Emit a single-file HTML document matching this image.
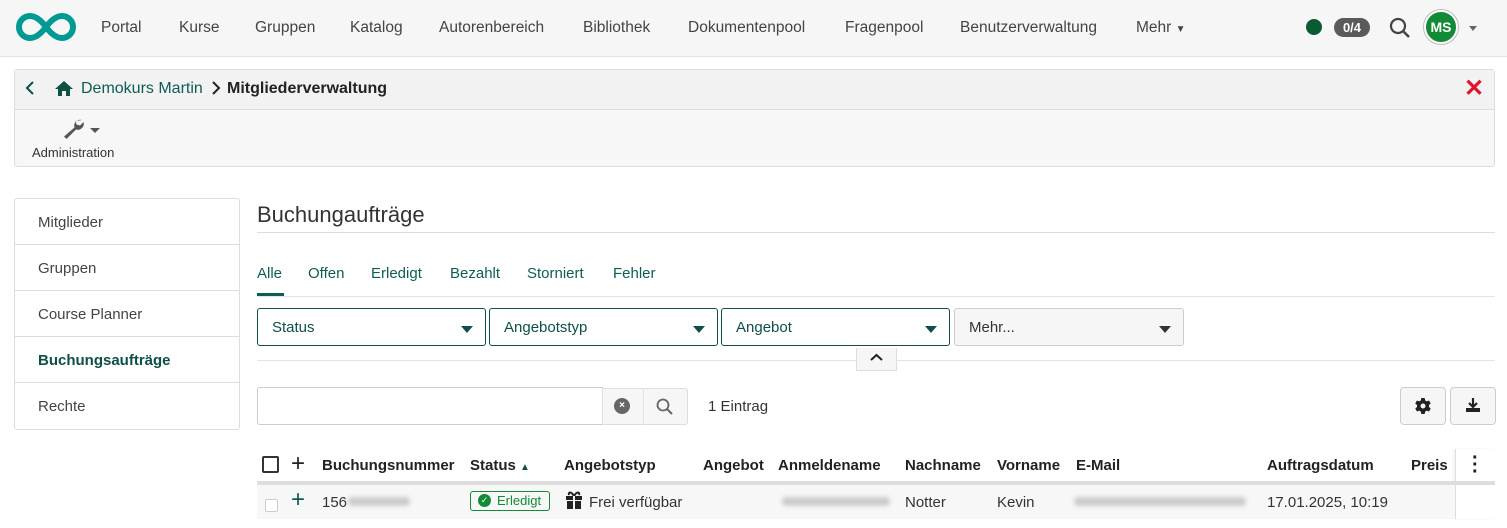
<!DOCTYPE html>
<html><head><meta charset="utf-8"><style>
*{box-sizing:border-box;margin:0;padding:0}
body{width:1507px;height:528px;overflow:hidden;background:#fff;font-family:"Liberation Sans",sans-serif;color:#333;font-size:15px;position:relative}
.abs{position:absolute}
.top{left:0;top:0;width:1507px;height:57px;background:#f6f6f6;border-bottom:1px solid #e3e3e3}
.nav{top:19px;font-size:15.5px;color:#444}
.g{color:#0e5d55}
.bc{left:14px;top:69px;width:1481px;height:98px;border:1px solid #ddd;border-radius:3px;background:#f7f7f7}
.bch{height:40px;border-bottom:1px solid #ddd;background:#f2f2f2}
.side{left:14px;top:198px;width:226px;height:232px;border:1px solid #ddd;border-radius:3px}
.side div{height:46px;border-bottom:1px solid #ddd;padding:15px 0 0 23px;font-size:15px;color:#444}
.side div:last-child{border-bottom:none}
.sel{border:1px solid #0e4f48;border-radius:3px;height:38px;padding:10px 14px;font-size:15px;color:#0e4f48}
.car{position:absolute;right:12px;top:17px;border-left:6px solid transparent;border-right:6px solid transparent;border-top:7px solid #0e4f48}
.th{top:457px;font-weight:bold;font-size:15px;color:#222}
.td{top:494px;font-size:15px;color:#333}
.blur{height:9px;background:#ccc;filter:blur(2px);border-radius:4px}
</style></head><body>
<div class="abs top"></div>
<svg class="abs" style="left:16px;top:12px" width="60" height="30" viewBox="0 0 60 30"><path d="M30 15C24 7 19 4 14 4A11 11 0 0 0 14 26C19 26 24 23 30 15C36 7 41 4 46 4A11 11 0 0 1 46 26C41 26 36 23 30 15Z" fill="none" stroke="#009a93" stroke-width="6"/></svg>
<div class="abs nav" style="left:101px">Portal</div>
<div class="abs nav" style="left:179px">Kurse</div>
<div class="abs nav" style="left:255px">Gruppen</div>
<div class="abs nav" style="left:350px">Katalog</div>
<div class="abs nav" style="left:439px">Autorenbereich</div>
<div class="abs nav" style="left:583px">Bibliothek</div>
<div class="abs nav" style="left:688px">Dokumentenpool</div>
<div class="abs nav" style="left:845px">Fragenpool</div>
<div class="abs nav" style="left:960px">Benutzerverwaltung</div>
<div class="abs nav" style="left:1136px">Mehr <span style="font-size:10px">▼</span></div>
<div class="abs" style="left:1306px;top:19px;width:16px;height:16px;border-radius:50%;background:#0a5a32"></div>
<div class="abs" style="left:1334px;top:18px;width:36px;height:19px;border-radius:10px;background:#5a5a5a;color:#fff;font-size:13px;font-weight:bold;text-align:center;line-height:19px">0/4</div>
<svg class="abs" style="left:1389px;top:17px" width="22" height="22" viewBox="0 0 22 22"><circle cx="9" cy="9" r="7" fill="none" stroke="#444" stroke-width="2.2"/><path d="M14 14L20 20" stroke="#444" stroke-width="2.5"/></svg>
<div class="abs" style="left:1424px;top:10px;width:34px;height:34px;border-radius:50%;background:#128a36;border:2px solid #fff;box-shadow:0 0 0 1px #bbb;color:#fff;font-weight:bold;font-size:14px;text-align:center;line-height:30px">MS</div>
<div class="abs" style="left:1469px;top:26px;border-left:4px solid transparent;border-right:4px solid transparent;border-top:5px solid #666"></div>
<div class="abs bc"><div class="bch"></div></div>
<svg class="abs" style="left:24px;top:81px" width="12" height="14" viewBox="0 0 12 14"><path d="M9 1L3 7L9 13" fill="none" stroke="#0e4f48" stroke-width="2"/></svg>
<svg class="abs" style="left:54px;top:80px" width="20" height="17" viewBox="0 0 20 17"><path d="M10 1L1 9H4V16H8V11H12V16H16V9H19Z" fill="#0e4f48"/></svg>
<div class="abs g" style="left:81px;top:80px;font-size:16px">Demokurs Martin</div>
<svg class="abs" style="left:211px;top:81px" width="10" height="14" viewBox="0 0 10 14"><path d="M2 1L8 7L2 13" fill="none" stroke="#222" stroke-width="2"/></svg>
<div class="abs" style="left:227px;top:80px;font-size:16px;color:#222"><b>Mitgliederverwaltung</b></div>
<div class="abs" style="left:1464px;top:74px;font-size:24px;color:#e0142a;font-weight:bold">✕</div>
<svg class="abs" style="left:62px;top:117px" width="42" height="22" viewBox="0 0 42 22"><path d="M20 3a6 6 0 0 0-7.5 7.5L2 19.5l2.5 2.5 9.5-9.5a6 6 0 0 0 7.5-7.5l-3.5 3.5-3.5-1-1-3.5z" fill="#555"/><path d="M28 11h10l-5 5z" fill="#555"/></svg>
<div class="abs" style="left:32px;top:145px;font-size:13px;color:#333">Administration</div>
<div class="abs side"><div>Mitglieder</div><div>Gruppen</div><div>Course Planner</div><div style="font-weight:bold;color:#0e4f48">Buchungsaufträge</div><div>Rechte</div></div>
<div class="abs" style="left:257px;top:202px;font-size:22px;color:#333">Buchungaufträge</div>
<div class="abs" style="left:257px;top:232px;width:1238px;height:1px;background:#ddd"></div>
<div class="abs g" style="left:257px;top:265px">Alle</div>
<div class="abs g" style="left:308px;top:265px">Offen</div>
<div class="abs g" style="left:371px;top:265px">Erledigt</div>
<div class="abs g" style="left:450px;top:265px">Bezahlt</div>
<div class="abs g" style="left:527px;top:265px">Storniert</div>
<div class="abs g" style="left:613px;top:265px">Fehler</div>
<div class="abs" style="left:257px;top:293px;width:27px;height:3px;background:#0e5d55"></div>
<div class="abs" style="left:257px;top:296px;width:1238px;height:1px;background:#e3e3e3"></div>
<div class="abs sel" style="left:257px;top:308px;width:229px">Status<span class="car"></span></div>
<div class="abs sel" style="left:489px;top:308px;width:229px">Angebotstyp<span class="car"></span></div>
<div class="abs sel" style="left:721px;top:308px;width:229px">Angebot<span class="car"></span></div>
<div class="abs sel" style="left:954px;top:308px;width:230px;border-color:#ccc;background:#f6f6f6;color:#333">Mehr...<span class="car" style="border-top-color:#333"></span></div>
<div class="abs" style="left:257px;top:360px;width:1238px;height:1px;background:#e3e3e3"></div>
<div class="abs" style="left:856px;top:348px;width:41px;height:23px;border:1px solid #ddd;border-top:none;background:#f6f6f6"></div>
<svg class="abs" style="left:870px;top:353px" width="13" height="9" viewBox="0 0 13 9"><path d="M1 7L6.5 2L12 7" fill="none" stroke="#222" stroke-width="2"/></svg>
<div class="abs" style="left:257px;top:387px;width:346px;height:38px;border:1px solid #ccc;border-radius:3px 0 0 3px"></div>
<div class="abs" style="left:602px;top:388px;width:86px;height:37px;border:1px solid #ddd;border-radius:0 3px 3px 0;background:#f6f6f6"></div>
<div class="abs" style="left:643px;top:388px;width:1px;height:37px;background:#e3e3e3"></div>
<div class="abs" style="left:614px;top:398px;width:16px;height:16px;border-radius:50%;background:#666;color:#fff;font-size:10px;text-align:center;line-height:16px;font-weight:bold">×</div>
<svg class="abs" style="left:656px;top:398px" width="18" height="18" viewBox="0 0 18 18"><circle cx="7" cy="7" r="5.5" fill="none" stroke="#666" stroke-width="1.8"/><path d="M11 11L16 16" stroke="#666" stroke-width="2"/></svg>
<div class="abs" style="left:708px;top:398px">1 Eintrag</div>
<div class="abs" style="left:1400px;top:387px;width:46px;height:38px;border:1px solid #ccc;border-radius:4px;background:#f6f6f6"></div>
<svg class="abs" style="left:1414px;top:397px" width="18" height="18" viewBox="0 0 18 18"><g fill="#222"><circle cx="9" cy="9" r="6"/><rect x="7" y="1" width="4" height="16" rx="1"/><rect x="7" y="1" width="4" height="16" rx="1" transform="rotate(60 9 9)"/><rect x="7" y="1" width="4" height="16" rx="1" transform="rotate(120 9 9)"/></g><circle cx="9" cy="9" r="2.5" fill="#f6f6f6"/></svg>
<div class="abs" style="left:1450px;top:387px;width:46px;height:38px;border:1px solid #ccc;border-radius:4px;background:#f6f6f6"></div>
<svg class="abs" style="left:1464px;top:396px" width="18" height="18" viewBox="0 0 18 18"><path d="M9 2V11M5 7L9 11L13 7" stroke="#222" stroke-width="2.2" fill="none"/><path d="M2 12H16V16H2Z" fill="#222"/></svg>
<div class="abs" style="left:262px;top:456px;width:17px;height:17px;border:2px solid #333;border-radius:2px"></div>
<div class="abs" style="left:291px;top:450px;font-size:24px;color:#222">+</div>
<div class="abs th" style="left:322px">Buchungsnummer</div>
<div class="abs th" style="left:470px">Status <span style="color:#0e4f48;font-size:10px">▲</span></div>
<div class="abs th" style="left:564px">Angebotstyp</div>
<div class="abs th" style="left:703px">Angebot</div>
<div class="abs th" style="left:778px">Anmeldename</div>
<div class="abs th" style="left:905px">Nachname</div>
<div class="abs th" style="left:997px">Vorname</div>
<div class="abs th" style="left:1076px">E-Mail</div>
<div class="abs th" style="left:1267px">Auftragsdatum</div>
<div class="abs th" style="left:1411px">Preis</div>
<div class="abs" style="left:1455px;top:449px;width:40px;height:70px;border-left:1px solid #ddd;box-shadow:-2px 0 3px rgba(0,0,0,.05)"></div>
<div class="abs" style="left:1472px;top:455px;font-size:20px;font-weight:bold;line-height:7px;color:#222">·<br>·<br>·</div>
<div class="abs" style="left:257px;top:481px;width:1238px;height:4px;background:#ddd"></div>
<div class="abs" style="left:257px;top:485px;width:1198px;height:34px;background:#f7f7f7"></div>
<div class="abs" style="left:265px;top:499px;width:13px;height:13px;border:1px solid #ccc;border-radius:2px;background:#fff"></div>
<div class="abs" style="left:291px;top:486px;font-size:24px;color:#0e5d55">+</div>
<div class="abs td" style="left:322px">156</div>
<div class="abs blur" style="left:348px;top:497px;width:62px"></div>
<div class="abs" style="left:470px;top:491px;width:80px;height:20px;border:1px solid #128a36;border-radius:3px;color:#128a36;font-size:13px;line-height:18px;padding-left:26px">Erledigt</div>
<div class="abs" style="left:478px;top:494px;width:13px;height:13px;border-radius:50%;background:#128a36;color:#fff;font-size:9px;text-align:center;line-height:13px">✓</div>
<svg class="abs" style="left:565px;top:490px" width="18" height="20" viewBox="0 0 18 20"><path d="M9 6C6 1 3 2 4 5M9 6C12 1 15 2 14 5" fill="none" stroke="#222" stroke-width="2"/><rect x="1" y="6" width="16" height="4" fill="#222"/><rect x="2" y="11" width="14" height="8" fill="#222"/><rect x="8" y="6" width="2" height="13" fill="#f7f7f7"/></svg>
<div class="abs td" style="left:589px">Frei verfügbar</div>
<div class="abs blur" style="left:782px;top:497px;width:108px"></div>
<div class="abs td" style="left:905px">Notter</div>
<div class="abs td" style="left:997px">Kevin</div>
<div class="abs blur" style="left:1074px;top:497px;width:172px"></div>
<div class="abs td" style="left:1267px">17.01.2025, 10:19</div>
</body></html>
